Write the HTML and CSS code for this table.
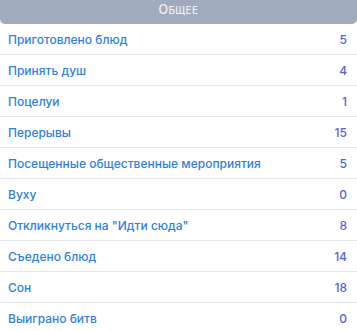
FILE: index.html
```html
<!DOCTYPE html>
<html>
<head>
<meta charset="utf-8">
<link rel="stylesheet" href="styles.css">
</head>
<body>
<div class="panel">
  <div class="header"><span class="cap">О</span><span class="small">БЩЕЕ</span></div>
  <div class="row"><span class="label">Приготовлено блюд</span><span class="value">5</span></div>
  <div class="row"><span class="label">Принять душ</span><span class="value">4</span></div>
  <div class="row"><span class="label">Поцелуи</span><span class="value">1</span></div>
  <div class="row"><span class="label">Перерывы</span><span class="value">15</span></div>
  <div class="row"><span class="label">Посещенные общественные мероприятия</span><span class="value">5</span></div>
  <div class="row"><span class="label">Вуху</span><span class="value">0</span></div>
  <div class="row"><span class="label">Откликнуться на "Идти сюда"</span><span class="value">8</span></div>
  <div class="row"><span class="label">Съедено блюд</span><span class="value">14</span></div>
  <div class="row"><span class="label">Сон</span><span class="value">18</span></div>
  <div class="row"><span class="label">Выиграно битв</span><span class="value">0</span></div>
</div>
</body>
</html>
```
FILE: styles.css
```css
html, body {
  margin: 0;
  padding: 0;
  background: #ffffff;
}
.panel {
  width: 357px;
  font-family: Inter, "Noto Sans", sans-serif;
}
.header {
  height: 24px;
  box-sizing: border-box;
  padding-bottom: 4px;
  background: #a0abbb;
  border-radius: 0 0 5px 5px;
  color: #eef1f5;
  display: flex;
  align-items: baseline;
  justify-content: center;
  line-height: 20px;
  font-weight: 500;
  letter-spacing: 0.4px;
}
.cap {
  font-size: 12.5px;
}
.small {
  font-size: 10px;
}
.row {
  height: 30px;
  border-bottom: 1px solid #e6eaf0;
  display: flex;
  align-items: center;
  justify-content: space-between;
  padding: 0 10px 0 8px;
  font-size: 12px;
  font-weight: 500;
}
.label {
  color: #2f7fe0;
}
.value {
  color: #5a5fd8;
}
```
